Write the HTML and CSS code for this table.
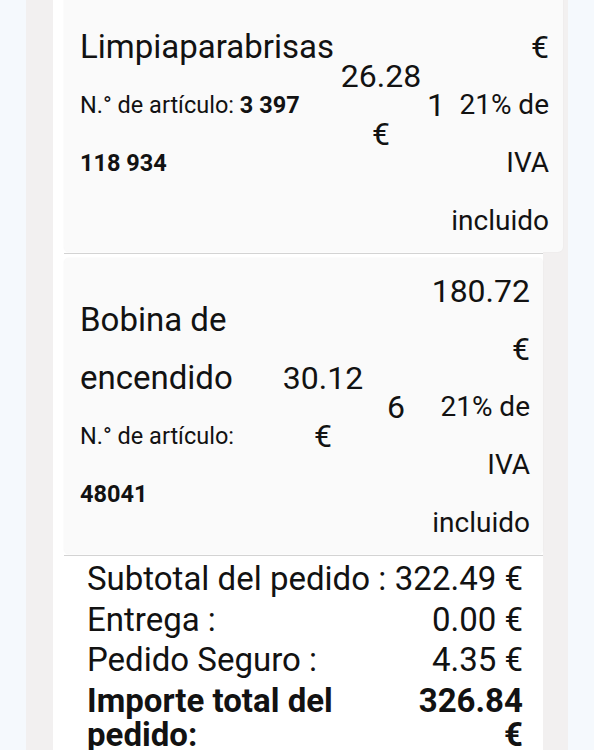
FILE: index.html
```html
<!DOCTYPE html>
<html lang="es">
<head>
<meta charset="utf-8">
<title>Pedido</title>
<link rel="stylesheet" href="styles.css">
</head>
<body>
<div class="frame">
  <div class="panel">
    <div class="items">
      <div class="row">
        <div class="card card--wiper">
          <div class="cell name-cell">
            <div class="name">Limpiaparabrisas</div>
            <div class="sku">N.° de artículo: <b>3 397 118 934</b></div>
          </div>
          <div class="cell price">26.28 €</div>
          <div class="cell qty">1</div>
          <div class="cell total">
            <div class="amount">26.28 €</div>
            <div class="vat">21% de IVA incluido</div>
          </div>
        </div>
      </div>
      <div class="row">
        <div class="card card--coil">
          <div class="cell name-cell">
            <div class="name">Bobina de encendido</div>
            <div class="sku">N.° de artículo: <b>48041</b></div>
          </div>
          <div class="cell price">30.12 €</div>
          <div class="cell qty">6</div>
          <div class="cell total">
            <div class="amount">180.72 €</div>
            <div class="vat">21% de IVA incluido</div>
          </div>
        </div>
      </div>
    </div>
    <div class="summary">
      <div class="sum-label">Subtotal del pedido :</div>
      <div class="sum-value">322.49 €</div>
      <div class="sum-label">Entrega :</div>
      <div class="sum-value">0.00 €</div>
      <div class="sum-label">Pedido Seguro :</div>
      <div class="sum-value">4.35 €</div>
      <div class="sum-label sum-label--total">Importe total del pedido:</div>
      <div class="sum-value sum-value--total">326.84 €</div>
    </div>
  </div>
</div>
</body>
</html>
```
FILE: styles.css
```css
* { box-sizing: border-box; }
html, body { margin: 0; }
body {
  background: #f5f9fd;
  font-family: Roboto, "Liberation Sans", sans-serif;
  color: #121212;
}
.frame {
  margin: 0 26px;
  background: #f2f0f0;
  padding: 0 25px 0 27px;
  height: 750px;
  overflow: hidden;
}
.panel {
  background: #fff;
  padding-left: 11px;
  min-height: 900px;
}
.items { margin-top: -48px; }
.row {
  padding: 4px 0 1px;
  border-bottom: 1px solid #d3d3d3;
}
.card {
  display: grid;
  align-items: center;
  width: max-content;
  min-width: 100%;
  background: #fafafa;
  border-radius: 5px;
  padding: 4px 14px 2px 16px;
  box-shadow: 0 0 2px rgba(0, 0, 0, 0.06);
}
.card--wiper { grid-template-columns: 256px 90px 20px 103px; }
.card--coil { grid-template-columns: 193px 100px 46px 111px; padding-right: 13px; }
.cell { line-height: 58px; }
.name { font-size: 33px; }
.sku { font-size: 23.5px; }
.sku b { font-weight: 700; }
.price, .qty { font-size: 32px; text-align: center; }
.total { text-align: right; }
.amount { font-size: 32px; }
.vat { font-size: 28px; }
.summary {
  display: grid;
  grid-template-columns: 302px 1fr;
  row-gap: 6.5px;
  padding: 6px 20px 0 23px;
  font-size: 33px;
  line-height: 34px;
}
.sum-value { text-align: right; white-space: nowrap; }
.sum-label--total, .sum-value--total { font-weight: 700; }
.sum-value--total { white-space: normal; width: min-content; justify-self: end; }
```
